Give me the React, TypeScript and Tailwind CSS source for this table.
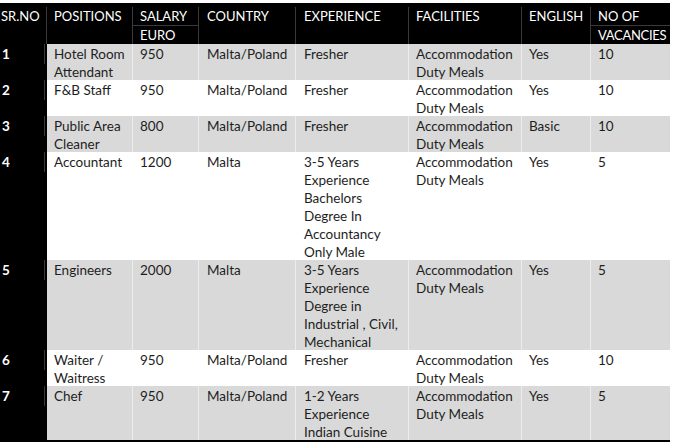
import React from 'react';

type Row = {
  no: string;
  position: string[];
  salary: string;
  country: string;
  experience: string[];
  english: string;
  vacancies: string;
  shaded: boolean;
};

const rows: Row[] = [
  { no: '1', position: ['Hotel Room', 'Attendant'], salary: '950', country: 'Malta/Poland', experience: ['Fresher'], english: 'Yes', vacancies: '10', shaded: true },
  { no: '2', position: ['F&B Staff'], salary: '950', country: 'Malta/Poland', experience: ['Fresher'], english: 'Yes', vacancies: '10', shaded: false },
  { no: '3', position: ['Public Area', 'Cleaner'], salary: '800', country: 'Malta/Poland', experience: ['Fresher'], english: 'Basic', vacancies: '10', shaded: true },
  { no: '4', position: ['Accountant'], salary: '1200', country: 'Malta', experience: ['3-5 Years', 'Experience', 'Bachelors', 'Degree In', 'Accountancy', 'Only Male'], english: 'Yes', vacancies: '5', shaded: false },
  { no: '5', position: ['Engineers'], salary: '2000', country: 'Malta', experience: ['3-5 Years', 'Experience', 'Degree in', 'Industrial , Civil,', 'Mechanical'], english: 'Yes', vacancies: '5', shaded: true },
  { no: '6', position: ['Waiter /', 'Waitress'], salary: '950', country: 'Malta/Poland', experience: ['Fresher'], english: 'Yes', vacancies: '10', shaded: false },
  { no: '7', position: ['Chef'], salary: '950', country: 'Malta/Poland', experience: ['1-2 Years', 'Experience', 'Indian Cuisine'], english: 'Yes', vacancies: '5', shaded: true },
];

const cols = 'grid grid-cols-[47px_86px_66px_97px_113px_113px_69px_79px]';
const cell = 'border-r border-white/50 translate-y-[1px]';
const head = 'border-r border-[#3a3a3a]';

const Lines: React.FC<{ lines: string[] }> = ({ lines }) => (
  <>
    {lines.map((l) => (
      <div key={l} className="whitespace-nowrap">{l}</div>
    ))}
  </>
);

const App: React.FC = () => {
  return (
    <div
      className="w-[680px] h-[442px] bg-white pt-[3px] overflow-hidden text-[13.5px] leading-[18px]"
      style={{ fontFamily: 'Lato, "Open Sans", sans-serif' }}
    >
      <div className="w-[670px]">
        {/* header */}
        <div className={`${cols} bg-black text-white text-[13px] h-[41px] pt-[4px]`}>
          <div className={`pl-[1px] ${head}`}>SR.NO</div>
          <div className={`pl-[7px] ${head}`}>POSITIONS</div>
          <div className={head}>
            <div className="pl-[7px] border-b border-[#3a3a3a]">SALARY</div>
            <div className="pl-[7px]">EURO</div>
          </div>
          <div className={`pl-[8px] ${head}`}>COUNTRY</div>
          <div className={`pl-[8px] ${head}`}>EXPERIENCE</div>
          <div className={`pl-[7px] ${head}`}>FACILITIES</div>
          <div className={`pl-[7px] ${head}`}>ENGLISH</div>
          <div>
            <div className="pl-[7px] border-b border-[#3a3a3a]">NO OF</div>
            <div className="pl-[7px] whitespace-nowrap tracking-[-0.3px]">VACANCIES</div>
          </div>
        </div>

        {/* body */}
        {rows.map((r) => (
          <div
            key={r.no}
            className={`${cols} text-[#1e1e1e] ${r.shaded ? 'bg-[#d9d9d9]' : 'bg-white'}`}
          >
            <div className="bg-black text-white font-bold pl-[2px] flex">
              <div className="w-[43px] border-r border-[#3a3a3a] h-[20px] pt-[1px]">{r.no}</div>
            </div>
            <div className={`pl-[7px] ${cell}`}><Lines lines={r.position} /></div>
            <div className={`pl-[7px] ${cell}`}>{r.salary}</div>
            <div className={`pl-[8px] ${cell}`}>{r.country}</div>
            <div className={`pl-[8px] ${cell}`}><Lines lines={r.experience} /></div>
            <div className={`pl-[7px] ${cell}`}>
              <div>Accommodation</div>
              <div>Duty Meals</div>
            </div>
            <div className={`pl-[7px] ${cell}`}>{r.english}</div>
            <div className="pl-[7px] translate-y-[1px]">{r.vacancies}</div>
          </div>
        ))}
        <div className="h-[4px] bg-black relative" />
      </div>
    </div>
  );
};

export default App;
